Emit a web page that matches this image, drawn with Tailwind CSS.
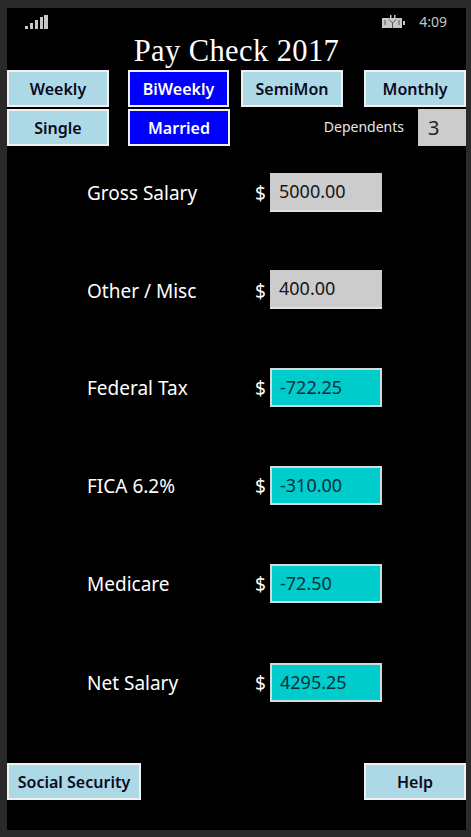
<!DOCTYPE html>
<html>
<head>
    <title>Pay Check 2017</title>
    <meta charset="UTF-8">
    <script src="https://cdn.jsdelivr.net/npm/@tailwindcss/browser@4"></script>
</head>
<body class="bg-[#2a2a2a] font-['Noto_Sans','Open_Sans',sans-serif]">
    <div class="w-[471px] h-[837px] pt-[8px] pb-[7px] px-[7px]">
        <div class="w-[459px] h-[822px] bg-black flex flex-col">

            <!-- status bar -->
            <div class="h-[28px] flex items-center pl-[18px] pr-[19px] text-[#c4c4c4]">
                <svg width="23" height="15" viewBox="0 0 23 15" fill="#c8c8c8">
                    <rect x="0" y="11" width="3" height="3"/>
                    <rect x="5" y="8" width="3" height="6"/>
                    <rect x="10" y="5" width="3" height="9"/>
                    <rect x="15" y="2" width="3" height="12"/>
                    <rect x="19" y="0" width="4" height="14"/>
                </svg>
                <svg class="ml-auto" width="23" height="14" viewBox="0 0 23 14">
                    <rect x="0" y="3" width="20" height="10" fill="#c8c8c8"/>
                    <rect x="21" y="6" width="2" height="4" fill="#c8c8c8"/>
                    <rect x="8" y="0" width="1.5" height="3" fill="#c8c8c8"/>
                    <rect x="12" y="0" width="1.5" height="3" fill="#c8c8c8"/>
                    <path d="M7 4.5l3.500 3.500v5M14 4.500l-3.500 3.500M3 5v5M17 5v5" stroke="#555" stroke-width="1" fill="none"/>
                </svg>
                <span class="ml-[14px] text-[14px] leading-none">4:09</span>
            </div>

            <h1 class="h-[34px] pt-[1px] text-center text-white text-[30.500px] leading-[29px] font-['Liberation_Serif',serif] tracking-[0.4px]">Pay Check 2017</h1>

            <!-- pay period -->
            <div class="flex text-[16px] font-semibold">
                <button class="w-[102px] h-[37px] bg-[#add8e6] border-2 border-[#f0f0f0] text-[#0a0a1e]">Weekly</button>
                <button class="w-[101px] h-[37px] ml-[19px] bg-[#0000ff] border-2 border-[#f0f0f0] text-white">BiWeekly</button>
                <button class="w-[102px] h-[37px] ml-[12px] bg-[#add8e6] border-2 border-[#f0f0f0] text-[#0a0a1e]">SemiMon</button>
                <button class="w-[102px] h-[37px] ml-[21px] bg-[#add8e6] border-2 border-[#f0f0f0] text-[#0a0a1e]">Monthly</button>
            </div>

            <!-- status + dependents -->
            <div class="flex items-center mt-[2px] text-[16px] font-semibold">
                <button class="w-[102px] h-[37px] bg-[#add8e6] border-2 border-[#f0f0f0] text-[#0a0a1e]">Single</button>
                <button class="w-[102px] h-[37px] ml-[19px] bg-[#0000ff] border-2 border-[#f0f0f0] text-white">Married</button>
                <span class="ml-auto mb-[3px] text-[14px] font-normal text-[#e6e6e6]">Dependents</span>
                <div class="w-[48px] h-[37px] ml-[14px] pl-[10px] bg-[#cccccc] text-[#222] text-[20px] font-normal leading-[38px]">3</div>
            </div>

            <!-- amounts -->
            <div class="mt-[27px] pl-[80px] flex flex-col gap-[59px] text-white text-[19px]">
                <div class="flex items-center h-[39px]">
                    <span class="w-[168px] pt-[2px]">Gross Salary</span>
                    <span class="w-[15px] pt-[2px]">$</span>
                    <div class="w-[112px] h-[39px] pl-[9px] flex items-center bg-[#cccccc] border-b-2 border-[#e0e0e0] text-[#151515] text-[18px]">5000.00</div>
                </div>
                <div class="flex items-center h-[39px] -mt-[1px]">
                    <span class="w-[168px] pt-[3px]">Other / Misc</span>
                    <span class="w-[15px] pt-[3px]">$</span>
                    <div class="w-[112px] h-[39px] pl-[9px] flex items-center bg-[#cccccc] border-b-2 border-[#e0e0e0] text-[#151515] text-[18px]">400.00</div>
                </div>
                <div class="flex items-center h-[39px]">
                    <span class="w-[168px] pt-[2px]">Federal Tax</span>
                    <span class="w-[15px] pt-[2px]">$</span>
                    <div class="w-[112px] h-[39px] pl-[8px] flex items-center bg-[#00cccc] border-2 border-[#cfdcdc] text-[#06303c] text-[18px]">-722.25</div>
                </div>
                <div class="flex items-center h-[39px]">
                    <span class="w-[168px] pt-[2px]">FICA 6.2%</span>
                    <span class="w-[15px] pt-[2px]">$</span>
                    <div class="w-[112px] h-[39px] pl-[8px] flex items-center bg-[#00cccc] border-2 border-[#cfdcdc] text-[#06303c] text-[18px]">-310.00</div>
                </div>
                <div class="flex items-center h-[39px]">
                    <span class="w-[168px] pt-[2px]">Medicare</span>
                    <span class="w-[15px] pt-[2px]">$</span>
                    <div class="w-[112px] h-[39px] pl-[8px] flex items-center bg-[#00cccc] border-2 border-[#cfdcdc] text-[#06303c] text-[18px]">-72.50</div>
                </div>
                <div class="flex items-center h-[39px] mt-[1px]">
                    <span class="w-[168px] pt-[1px]">Net Salary</span>
                    <span class="w-[15px] pt-[1px]">$</span>
                    <div class="w-[112px] h-[39px] pl-[8px] flex items-center bg-[#00cccc] border-2 border-[#cfdcdc] text-[#06303c] text-[18px]">4295.25</div>
                </div>
            </div>

            <!-- bottom buttons -->
            <div class="mt-auto mb-[30px] flex justify-between text-[16px] font-semibold">
                <button class="w-[134px] h-[37px] bg-[#add8e6] border-2 border-[#f0f0f0] text-[#0a0a1e]">Social Security</button>
                <button class="w-[102px] h-[37px] bg-[#add8e6] border-2 border-[#f0f0f0] text-[#0a0a1e]">Help</button>
            </div>
        </div>
    </div>
</body>
</html>
